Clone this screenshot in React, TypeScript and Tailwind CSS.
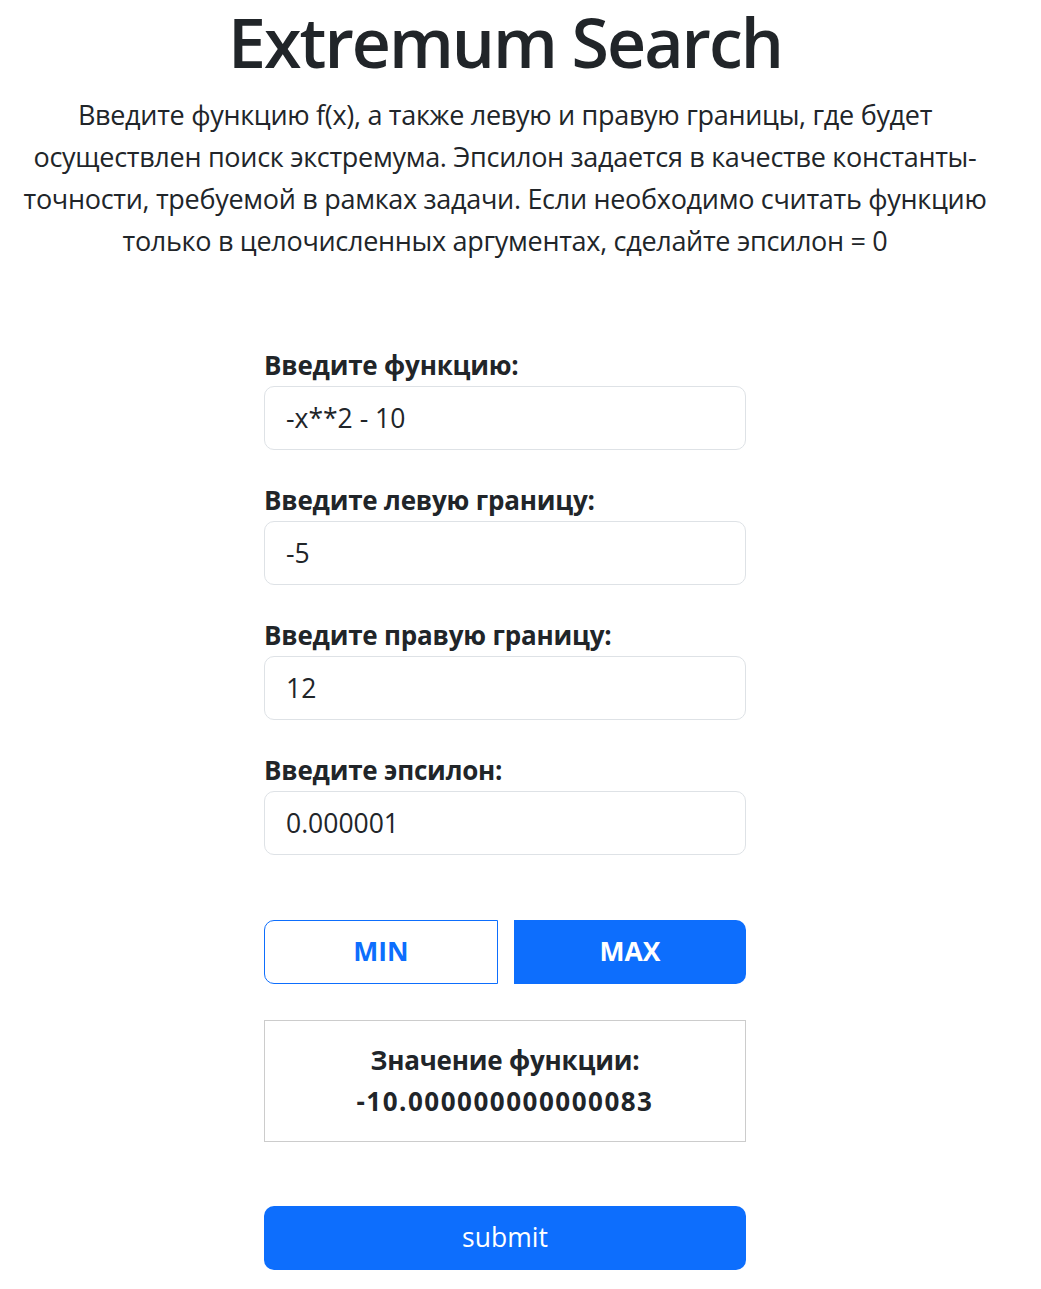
const lines = [
  'Введите функцию f(x), а также левую и правую границы, где будет',
  'осуществлен поиск экстремума. Эпсилон задается в качестве константы-',
  'точности, требуемой в рамках задачи. Если необходимо считать функцию',
  'только в целочисленных аргументах, сделайте эпсилон = 0',
];

const fields = [
  { label: 'Введите функцию:', value: '-x**2 - 10' },
  { label: 'Введите левую границу:', value: '-5' },
  { label: 'Введите правую границу:', value: '12' },
  { label: 'Введите эпсилон:', value: '0.000001' },
];

export default function App() {
  return (
    <div className="min-h-screen bg-white text-[#212529] font-['Open_Sans','Noto_Sans',sans-serif]">
      <div className="w-[1010px]">
        <h1 className="text-center text-[68px] leading-[84px] font-semibold tracking-[-2px]">Extremum Search</h1>

        <p className="mt-[10px] text-center text-[27px] leading-[42px] tracking-[-0.3px]">
          {lines.map((l) => (
            <span key={l} className="block whitespace-nowrap">{l}</span>
          ))}
        </p>

        <form className="mx-auto mt-[86px] w-[482px]">
          {fields.map((f, i) => (
            <div key={f.label} className={i ? 'mt-[33px]' : ''}>
              <label className="block text-[26px] leading-[34px] font-bold tracking-[-0.2px] mb-[4px]">{f.label}</label>
              <input
                defaultValue={f.value}
                className="block w-full h-[64px] rounded-[10px] border border-[#dee2e6] px-[21px] text-[26.5px] text-[#212529] outline-none"
              />
            </div>
          ))}

          <div className="mt-[65px] flex gap-[16px]">
            <button type="button" className="flex-1 h-[64px] rounded-l-[10px] border border-[#0d6efd] text-[#0d6efd] text-[26.5px] font-bold">MIN</button>
            <button type="button" className="flex-1 h-[64px] rounded-r-[10px] bg-[#0d6efd] text-white text-[26.5px] font-bold">MAX</button>
          </div>

          <div className="mt-[36px] border border-[#cccccc] py-[19px] text-center text-[26px] leading-[41px] font-bold tracking-[-0.2px]">
            <div>Значение функции:</div>
            <div className="tracking-[1.5px]">-10.000000000000083</div>
          </div>

          <button type="button" className="mt-[64px] block w-full h-[64px] rounded-[10px] bg-[#0d6efd] text-white text-[26.5px]">submit</button>
        </form>
      </div>
    </div>
  );
}
